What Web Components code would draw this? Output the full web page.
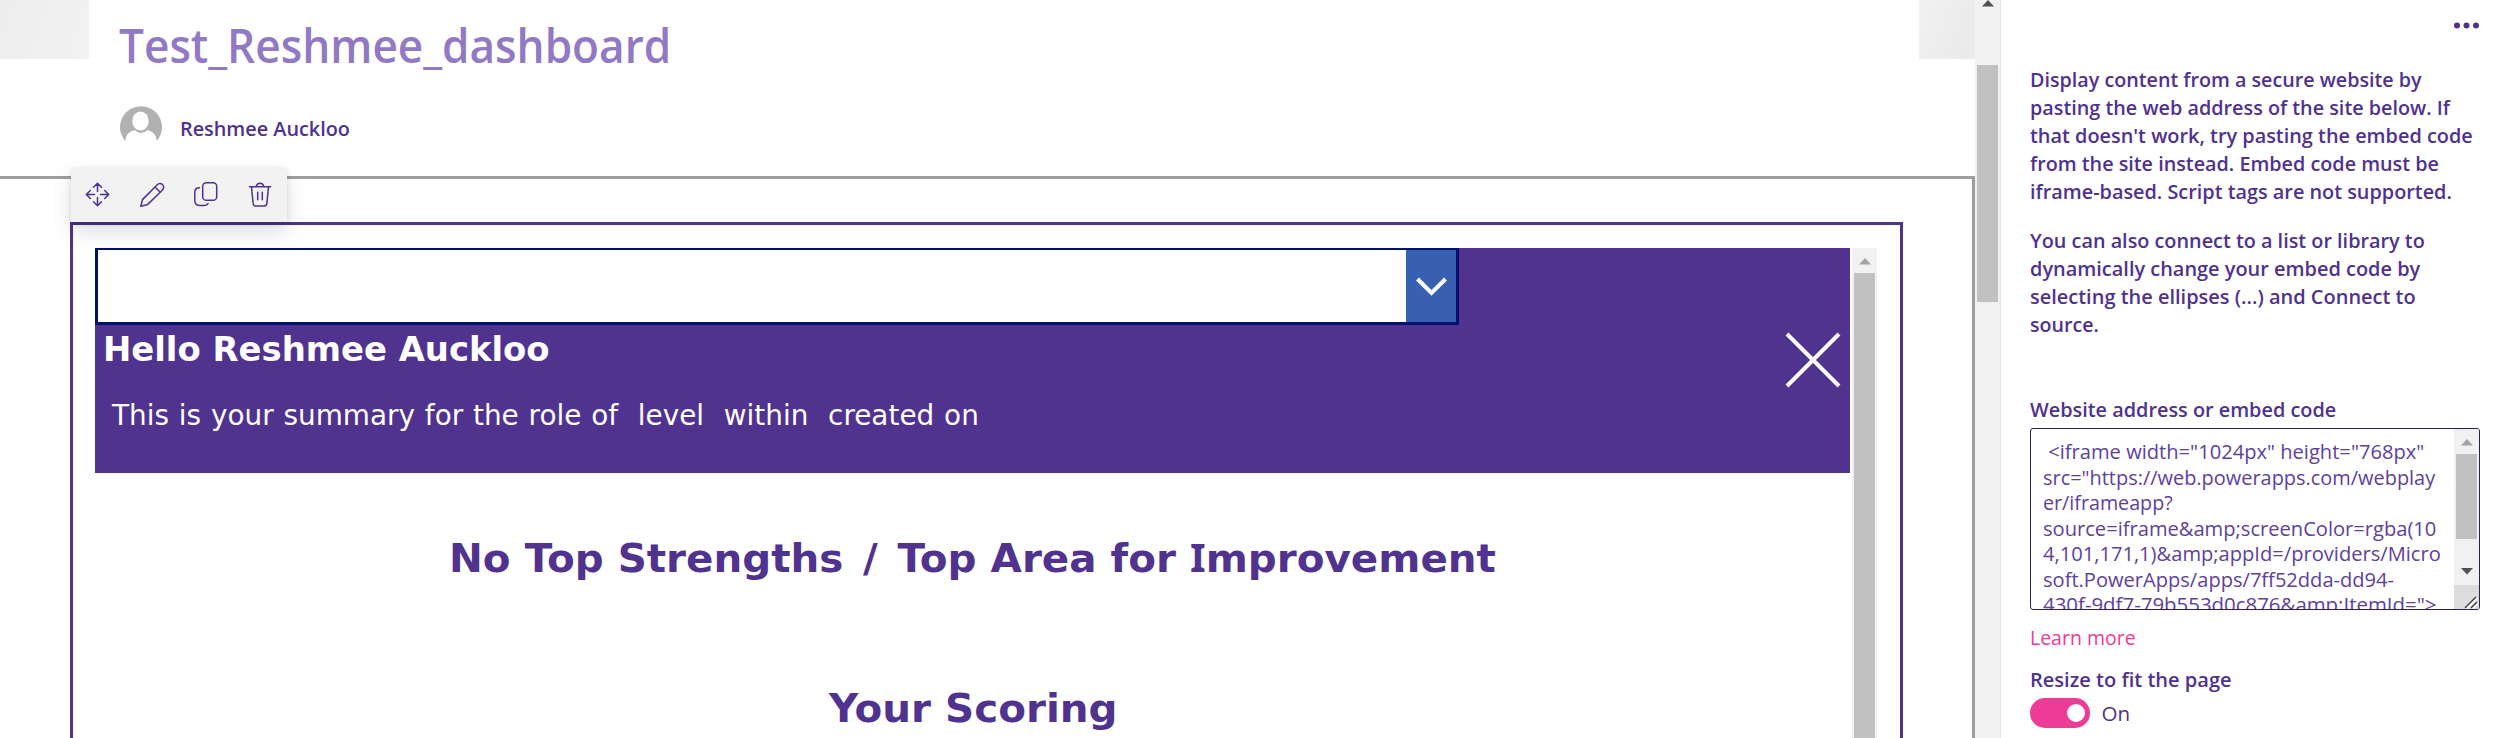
<!DOCTYPE html>
<html lang="en">
<head>
<meta charset="utf-8">
<title>Test_Reshmee_dashboard</title>
<style>
html,body{margin:0;padding:0;background:#fff}
body{width:2497px;height:738px;overflow:hidden;font-family:"Open Sans","Noto Sans",sans-serif;color:#4f328e}
</style>
</head>
<body>
<page-editor></page-editor>
<script>
const define = (name, html, after) => customElements.define(name, class extends HTMLElement {
  connectedCallback() {
    if (!this.shadowRoot) this.attachShadow({mode: 'open'}).innerHTML = html;
    if (after) after.call(this);
  }
});

// One line of text, condensed or widened to the given width.
define('fit-line', `<style>:host{display:block;white-space:pre}span{display:inline-block;transform-origin:0 50%}</style><span><slot></slot></span>`, function () {
  const s = this.shadowRoot.querySelector('span');
  s.style.transform = `scaleX(${this.getAttribute('w') / s.offsetWidth})`;
});

define('scroll-bar', `<style>
:host{display:flex;flex-direction:column;box-sizing:border-box;width:25px;background:#f1f1f1;align-items:center}
svg{display:block;flex:none}
i{display:block;width:21px;height:var(--thumb);margin-top:var(--gap);background:#c1c1c1;flex:none}
</style><svg width="12" height="7" style="margin-top:var(--top)"><path d="M0 6.5L6 0l6 6.5z" fill="var(--arrow,#a3a3a3)"/></svg><i></i><slot></slot>`);

define('tool-bar', `<style>
:host{display:flex;width:216px;height:55px;background:#f3f2f3;border-radius:4px 4px 0 0;box-shadow:0 10px 22px rgba(0,0,0,.13),0 2px 5px rgba(0,0,0,.1)}
svg{display:block;width:54px;height:55px;fill:none;stroke:#4f328e;stroke-width:1.5;stroke-linecap:round;stroke-linejoin:round}
</style>
<svg viewBox="0 0 54 55"><path d="M26.5 16.5v8M26.5 30.5v8M15.5 27.5h8M29.5 27.5h8M22.5 20.3l4-4 4 4M22.5 34.7l4 4 4-4M19.3 23.5l-4 4 4 4M33.7 23.5l4 4-4 4"/></svg>
<svg viewBox="0 0 54 55"><path d="M15.8 39.2L17.5 32.6L32 18Q34.5 15.4 37.4 17.4Q40 20.3 37.3 23.2L22.7 37.4ZM30 20l5.3 5.3"/></svg>
<svg viewBox="0 0 54 55"><rect x="23.7" y="15.7" width="14" height="17.6" rx="3.6"/><path d="M20.5 20.8q-4.7 0-4.7 4.7v7.7q0 5.3 5.3 5.3h3.6q3.5 0 4.3-2"/></svg>
<svg viewBox="0 0 54 55"><path d="M16.5 19.7h21M23.2 19.5q.6-3.3 3.8-3.3t3.8 3.3M18.5 20l1.6 16.2q.3 2.9 2.8 2.9h8.2q2.5 0 2.8-2.9L35.5 20M24.7 25.3v7.5M29.3 25.3v7.5"/></svg>`);

define('page-header', `<style>
:host{display:flex;justify-content:space-between;height:176px;align-items:flex-start;overflow:hidden}
.b{height:59px;background:linear-gradient(110deg,#ededed,#f2f2f2)}
.l{width:89px}.r{width:56px;background:linear-gradient(110deg,#f1f1f1,#e9e9e9)}
main{flex:1;padding:15px 0 0 30px}
.t{font-size:47.2px;line-height:60px;font-weight:600;color:#9179c3}
.a{display:flex;margin:31px 0 0 1px;align-items:flex-start}
.n{font-size:20.6px;line-height:28px;font-weight:550;margin:8px 0 0 17.5px}
</style><div class="b l"></div><main><fit-line class="t" w="552">Test_Reshmee_dashboard</fit-line>
<div class="a"><svg width="42" height="36" viewBox="0 0 42 36"><path d="M5.2 35A21 21 0 1 1 36.8 35Q36 26 27.5 24Q21 30 14.5 24Q6 26 5.2 35Z" fill="#b1b1b1"/><ellipse cx="20.5" cy="15" rx="8.2" ry="9.6" fill="#fff"/></svg>
<fit-line class="n" w="169.5">Reshmee Auckloo</fit-line></div></main><div class="b r"></div>`);

define('embedded-app', `<style>
:host{display:flex;height:490px;font-family:"DejaVu Sans",Verdana,sans-serif}
.app{width:1755px;margin-right:2px}
.top{height:225px;background:#50328f;color:#fff}
.dd{display:flex;justify-content:flex-end;box-sizing:border-box;width:1364px;height:77px;border:3px solid #00126b;border-top-width:2px;background:#fff}
.dd svg{width:50px;height:72px;background:#3860b2;display:block}
.row{display:flex;justify-content:space-between;align-items:flex-start}
.h{font-size:33.7px;font-weight:700;line-height:44px;padding:3px 0 0 7.5px}
.s{font-size:28px;line-height:36px;padding:25.5px 0 0 17px;word-spacing:1px}
.x{margin:7px 9px 0 0;display:block}
.big{font-size:39.6px;font-weight:700;line-height:50px;color:#50328f}
.b1{margin:59px 0 0 354px}.b2{margin:100px 0 0 734px}
.i{font-family:"Noto Sans"}.sl{padding:0 .14em}
scroll-bar{--top:10px;--gap:8px;--thumb:500px;overflow:hidden}
</style><div class="app"><div class="top"><div class="dd"><svg viewBox="0 0 50 72"><path d="M11.5 29L25.5 43L39.5 29" fill="none" stroke="#fff" stroke-width="4"/></svg></div>
<div class="row"><div><fit-line class="h" w="447">Hello Reshmee Auckloo</fit-line><fit-line class="s" w="867">This is your summary for the role of  level  within  created on</fit-line></div>
<svg class="x" width="56" height="56"><path d="M2 2L54 54M54 2L2 54" stroke="#fff" stroke-width="4"/></svg></div></div>
<fit-line class="big b1" w="1047">No Top Strengths <span class="sl">/</span> Top Area for <span class="i">I</span>mprovement</fit-line>
<fit-line class="big b2" w="288">Your Scoring</fit-line></div><scroll-bar></scroll-bar>`);

define('page-canvas', `<style>
:host{display:block;width:1975px;height:738px;overflow:hidden}
section{position:relative;box-sizing:border-box;height:562px;border-top:3px solid #a09e9c;border-right:3px solid #a09e9c;padding:43px 0 0 70px}
.part{box-sizing:border-box;width:1833px;height:600px;border:3px solid #50328f;padding:23px 0 0 22px}
tool-bar{position:absolute;left:71px;top:-12px}
</style><page-header></page-header><section><div class="part"><embedded-app></embedded-app></div><tool-bar></tool-bar></section>`);

define('toggle-switch', `<style>
:host{display:flex;align-items:center;height:30px;gap:11.5px;font-size:20.6px;line-height:28px}
i{display:block;box-sizing:border-box;width:60px;height:30px;border-radius:15px;background:#ee3b95;padding:6px 0 0 37px}
i::after{content:"";display:block;width:18px;height:18px;border-radius:50%;background:#fff}
</style><i></i><fit-line w="29">On</fit-line>`);

define('code-area', `<style>
:host{display:flex;justify-content:space-between;box-sizing:border-box;width:450px;height:182px;border:1px solid #2f1c59;border-radius:3px;overflow:hidden;color:#5d419b}
.c{padding:10px 0 0 12px;font-size:20.6px;line-height:25.5px}
scroll-bar{--top:10px;--gap:8px;--thumb:85px}
.d{margin-top:29px;flex:none}.g{margin-top:10px;flex:none;background:#dcdcdc}
</style><div class="c">
<fit-line w="381"> &lt;iframe width="1024px" height="768px"</fit-line>
<fit-line w="392">src="https://web.powerapps.com/webplay</fit-line>
<fit-line w="130">er/iframeapp?</fit-line>
<fit-line w="393.5">source=iframe&amp;amp;screenColor=rgba(10</fit-line>
<fit-line w="397.5">4,101,171,1)&amp;amp;appId=/providers/Micro</fit-line>
<fit-line w="351">soft.PowerApps/apps/7ff52dda-dd94-</fit-line>
<fit-line w="393.5">430f-9df7-79b553d0c876&amp;amp;ItemId="&gt;</fit-line></div>
<scroll-bar><svg class="d" width="12" height="7"><path d="M0 0h12L6 6.5z" fill="#505050"/></svg><svg class="g" width="25" height="25"><path d="M11 23L22 12M17 23L23 17" stroke="#fff" stroke-width="2" transform="translate(1,1)"/><path d="M11 23L22 12M17 23L23 17" stroke="#444" stroke-width="1.5"/></svg></scroll-bar>`);

define('property-pane', `<style>
:host{display:block;box-sizing:border-box;width:497px;height:738px;border-left:1px solid #e8e8e8;padding:22px 0 0 29px;font-size:20.6px;line-height:28px}
.dots{display:block;margin-left:423px}
.p,.q,.l,.r{font-weight:550}
.p{margin-top:36px}.q{margin-top:20.5px}.l{margin-top:57px;margin-bottom:5.5px}
.m{color:#ee3b95;margin-top:13px}.r{margin:14px 0 5px}
</style>
<svg class="dots" width="30" height="7" fill="#4f328e"><circle cx="4" cy="3.6" r="3"/><circle cx="13.5" cy="3.6" r="3"/><circle cx="23" cy="3.6" r="3"/></svg>
<div class="p"><fit-line w="391.5">Display content from a secure website by</fit-line>
<fit-line w="420">pasting the web address of the site below. If</fit-line>
<fit-line w="443">that doesn't work, try pasting the embed code</fit-line>
<fit-line w="409">from the site instead. Embed code must be</fit-line>
<fit-line w="422">iframe-based. Script tags are not supported.</fit-line></div>
<div class="q"><fit-line w="394.5">You can also connect to a list or library to</fit-line>
<fit-line w="390">dynamically change your embed code by</fit-line>
<fit-line w="386">selecting the ellipses (...) and Connect to</fit-line>
<fit-line w="68.5">source.</fit-line></div>
<fit-line class="l" w="306.5">Website address or embed code</fit-line>
<code-area></code-area>
<fit-line class="m" w="106">Learn more</fit-line>
<fit-line class="r" w="201.5">Resize to fit the page</fit-line>
<toggle-switch></toggle-switch>`);

define('page-editor', `<style>
:host{display:flex;width:2497px;height:738px;overflow:hidden}
scroll-bar{height:738px;--top:0px;--gap:58px;--thumb:237px;--arrow:#505050}
</style><page-canvas></page-canvas><scroll-bar></scroll-bar><property-pane></property-pane>`);
</script>
</body>
</html>
